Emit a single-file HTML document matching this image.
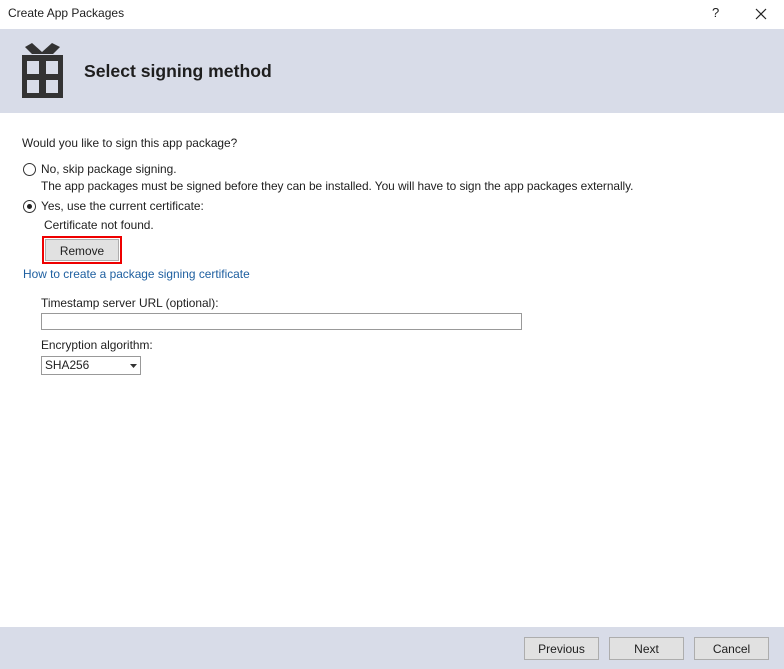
<!DOCTYPE html>
<html><head><style>
*{margin:0;padding:0;box-sizing:border-box}
body{width:784px;height:669px;background:#fff;font-family:"Segoe UI","Liberation Sans",sans-serif;font-size:11.9px;color:#1e1e1e;position:relative;overflow:hidden}
.a{position:absolute;white-space:nowrap}
.hdr{position:absolute;left:0;top:29px;width:784px;height:84px;background:#d8dce8}
.ftr{position:absolute;left:0;top:627px;width:784px;height:42px;background:#d8dce8}
.btn{position:absolute;top:637px;width:75px;height:23px;background:#e1e1e1;border:1px solid #adadad;text-align:center;line-height:23px;font-size:12px}
.radio{position:absolute;width:13px;height:13px;border:1px solid #333;border-radius:50%;background:#fff}
</style></head><body>
<div class="a" style="left:8px;top:6px;font-size:12px">Create App Packages</div>
<div class="a" style="left:712px;top:5px;font-size:13px">?</div>
<svg class="a" style="left:755px;top:8px" width="12" height="12"><path d="M1 1L11 11M11 1L1 11" stroke="#222" stroke-width="1.2"/></svg>
<div class="hdr"></div>
<svg class="a" style="left:22px;top:43px" width="41" height="55">
<path d="M3 4L10 0L20 9L30 0L38 4L31 11L10 11Z" fill="#333"/>
<rect x="0" y="12" width="41" height="43" fill="#333"/>
<rect x="5" y="18" width="12" height="13" fill="#d8dce8"/>
<rect x="24" y="18" width="12" height="13" fill="#d8dce8"/>
<rect x="5" y="37" width="12" height="13" fill="#d8dce8"/>
<rect x="24" y="37" width="12" height="13" fill="#d8dce8"/>
</svg>
<div class="a" style="left:84px;top:61px;font-size:17.6px;font-weight:bold;color:#1e1e1e">Select signing method</div>
<div class="a" style="left:22px;top:136px">Would you like to sign this app package?</div>
<div class="radio" style="left:23px;top:163px"></div>
<div class="a" style="left:41px;top:162px">No, skip package signing.</div>
<div class="a" style="left:41px;top:179px;letter-spacing:-0.05px">The app packages must be signed before they can be installed. You will have to sign the app packages externally.</div>
<div class="radio" style="left:23px;top:200px"></div>
<div class="a" style="left:27px;top:204px;width:5px;height:5px;border-radius:50%;background:#222"></div>
<div class="a" style="left:41px;top:199px">Yes, use the current certificate:</div>
<div class="a" style="left:44px;top:218px">Certificate not found.</div>
<div class="a" style="left:42px;top:236px;width:80px;height:28px;border:2px solid #e00;"><div style="margin:1px;height:22px;background:#e1e1e1;border:1px solid #adadad;text-align:center;line-height:22px">Remove</div></div>
<div class="a" style="left:23px;top:267px;color:#1e5fa0">How to create a package signing certificate</div>
<div class="a" style="left:41px;top:296px">Timestamp server URL (optional):</div>
<div class="a" style="left:41px;top:313px;width:481px;height:17px;border:1px solid #999;background:#fff"></div>
<div class="a" style="left:41px;top:338px">Encryption algorithm:</div>
<div class="a" style="left:41px;top:356px;width:100px;height:19px;border:1px solid #999;background:#fff;padding-left:3px;line-height:17px">SHA256</div>
<svg class="a" style="left:130px;top:364px" width="7" height="4"><path d="M0 0H7L3.5 4Z" fill="#333"/></svg>
<div class="ftr"></div>
<div class="btn" style="left:524px">Previous</div>
<div class="btn" style="left:609px">Next</div>
<div class="btn" style="left:694px">Cancel</div>
</body></html>
